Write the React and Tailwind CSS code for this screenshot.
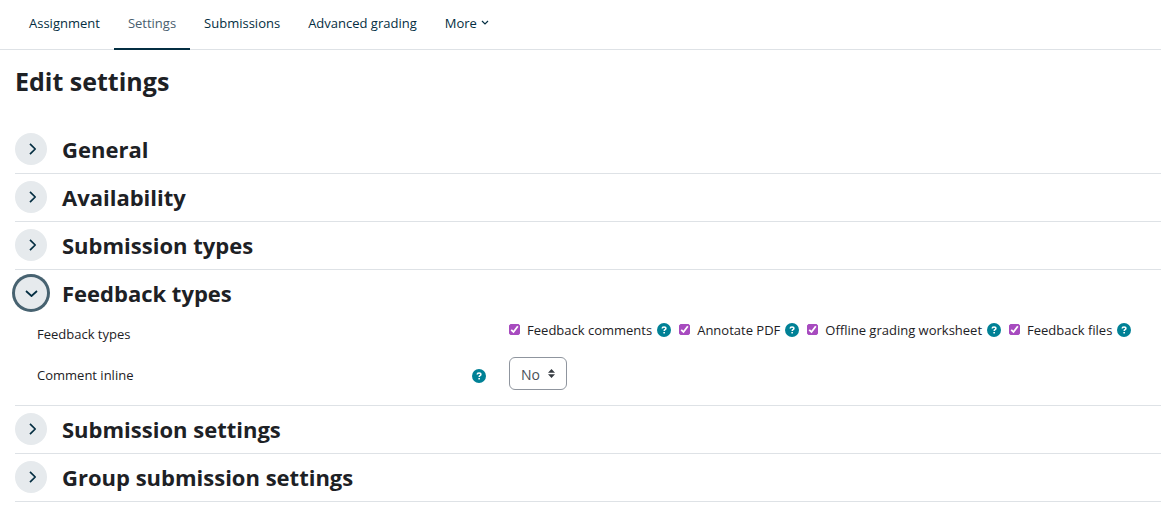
import { useState } from 'react';

const tabs = ['Assignment', 'Settings', 'Submissions', 'Advanced grading'];

const feedbackOptions = [
  { id: 'comments', label: 'Feedback comments' },
  { id: 'pdf', label: 'Annotate PDF' },
  { id: 'offline', label: 'Offline grading worksheet' },
  { id: 'files', label: 'Feedback files' },
];

function HelpButton({ label }) {
  return (
    <button type="button" aria-label={`Help with ${label}`} className="shrink-0 cursor-pointer">
      <svg width="14" height="14" viewBox="0 0 14 14" className="block">
        <circle cx="7" cy="7" r="7" fill="#008196" />
        <path
          d="M5.2 5.5C5.2 4.5 6 3.9 7 3.9s1.9.6 1.9 1.6c0 1.2-1.7 1.2-1.7 2.4"
          fill="none"
          stroke="#fff"
          strokeWidth="1.5"
        />
        <rect x="6.3" y="8.9" width="1.7" height="1.6" rx="0.4" fill="#fff" />
      </svg>
    </button>
  );
}

function Checkbox({ id, label }) {
  return (
    <div className="flex items-center">
      <span className="relative mr-[7px] mb-0.5 block size-[11px]">
        <input
          id={id}
          type="checkbox"
          defaultChecked
          className="peer block size-[11px] appearance-none rounded-[2px] border border-[#8f959e] bg-white checked:border-[#a74bbf] checked:bg-[#a74bbf]"
        />
        <svg
          viewBox="0 0 11 11"
          className="pointer-events-none absolute inset-0 hidden size-[11px] peer-checked:block"
          fill="none"
          stroke="#fff"
          strokeWidth="1.8"
        >
          <path d="M2.2 5.8 4.5 8l4.3-5.8" />
        </svg>
      </span>
      <label htmlFor={id} className="mr-[5px] whitespace-nowrap">
        {label}
      </label>
      <HelpButton label={label} />
    </div>
  );
}

function Section({ title, open, focused, onToggle, children }) {
  return (
    <section className="border-b border-[#dee2e6]">
      <div className="flex h-[47px] items-center gap-[15px] pb-0.5">
        <button
          type="button"
          aria-expanded={open}
          aria-label={title}
          onClick={onToggle}
          className={`flex size-8 shrink-0 cursor-pointer items-center justify-center rounded-full bg-[#e6eaed] outline-none ${
            focused ? 'ring-3 ring-[#476270]' : ''
          }`}
        >
          <svg
            width="14"
            height="14"
            viewBox="0 0 14 14"
            fill="none"
            stroke="#042e42"
            strokeWidth="1.7"
            strokeLinejoin="round"
          >
            {open ? <path d="M2 5 7.5 10 13 5" /> : <path d="M6 1.8 11.2 7 6 12.2" />}
          </svg>
        </button>
        <h3 className="text-[22px] leading-8 font-bold">{title}</h3>
      </div>
      {open && children}
    </section>
  );
}

function FeedbackTypes() {
  return (
    <div className="pb-[15px] pl-[22px]">
      <div className="flex items-start pt-[3px]">
        <div className="w-[42%] shrink-0 pt-1 leading-5">Feedback types</div>
        <div className="flex items-center gap-2 leading-5">
          {feedbackOptions.map((option) => (
            <Checkbox key={option.id} {...option} />
          ))}
        </div>
      </div>
      <div className="mt-[13px] flex items-center">
        <div className="flex w-[42%] shrink-0 items-center justify-between pr-[23px] pt-1">
          <label htmlFor="comment-inline">Comment inline</label>
          <HelpButton label="Comment inline" />
        </div>
        <div className="relative">
          <select
            id="comment-inline"
            defaultValue="no"
            className="block h-[33px] appearance-none rounded-md border border-[#8f959e] bg-white pt-0.5 pr-[22px] pl-[11px] text-[14px] text-[#495057]"
          >
            <option value="no">No</option>
            <option value="yes">Yes</option>
          </select>
          <svg
            width="7"
            height="9"
            viewBox="0 0 7 9"
            fill="#343a40"
            className="pointer-events-none absolute top-3 right-3"
          >
            <path d="M3.5 0 7 3.7H0zM3.5 9 0 5.3h7z" />
          </svg>
        </div>
      </div>
    </div>
  );
}

const sections = [
  { title: 'General' },
  { title: 'Availability' },
  { title: 'Submission types' },
  { title: 'Feedback types', content: <FeedbackTypes /> },
  { title: 'Submission settings' },
  { title: 'Group submission settings' },
];

export default function App() {
  const [current, setCurrent] = useState('Feedback types');
  const [opened, setOpened] = useState(['Feedback types']);

  const toggle = (title) => {
    setCurrent(title);
    setOpened((prev) => (prev.includes(title) ? prev.filter((t) => t !== title) : [...prev, title]));
  };

  return (
    <div className="min-h-screen bg-white font-['Segoe_UI','Open_Sans',sans-serif] text-[13px] text-[#1d2125]">
      <nav className="flex h-[50px] border-b border-[#dee2e6] pl-[15px] text-[#042e42]">
        {tabs.map((tab) => (
          <a
            key={tab}
            href="#"
            className={`-mb-px border-b-2 px-3.5 pt-[13px] leading-5 whitespace-nowrap ${
              tab === 'Settings' ? 'border-[#042e42] text-[#495e6e]' : 'border-transparent'
            }`}
          >
            {tab}
          </a>
        ))}
        <button type="button" className="flex cursor-pointer items-center gap-1 self-start px-3.5 pt-[13px] leading-5">
          More
          <svg width="8" height="6" viewBox="0 0 8 6" fill="none" stroke="currentColor" strokeWidth="1.2">
            <path d="M1 1l3 3 3-3" />
          </svg>
        </button>
      </nav>

      <main className="pl-[15px]">
        <h2 className="pt-[15px] pb-[29px] text-[25px] leading-8 font-bold">Edit settings</h2>
        {sections.map(({ title, content }) => (
          <Section
            key={title}
            title={title}
            open={opened.includes(title)}
            focused={current === title}
            onToggle={() => toggle(title)}
          >
            {content}
          </Section>
        ))}
      </main>
    </div>
  );
}
